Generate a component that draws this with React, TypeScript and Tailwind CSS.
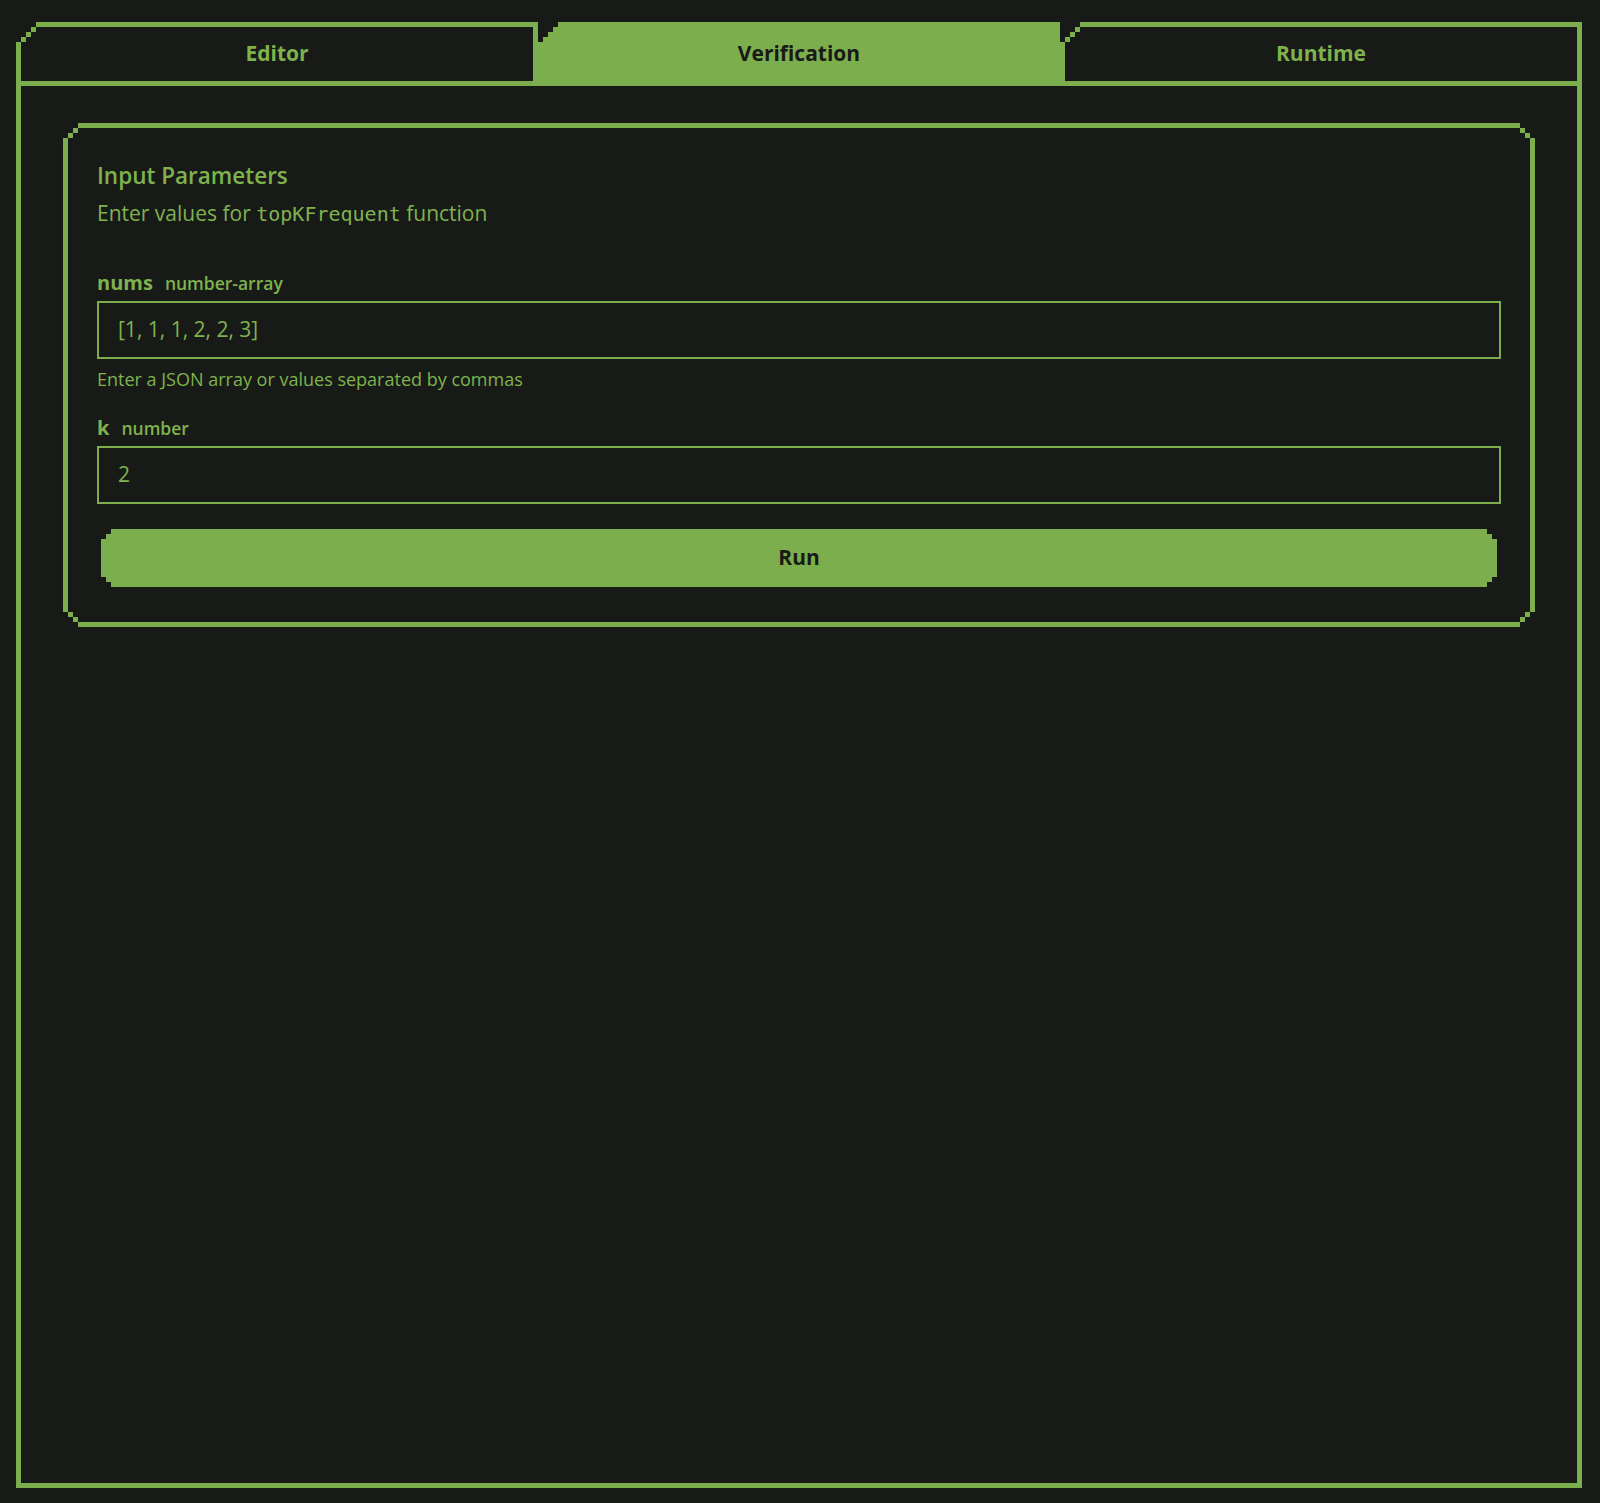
import React from "react";

// pixel-stepped corners: outer shape is green, inner shape (inset by the border) is dark
const tabOuter =
  "[clip-path:polygon(0_20px,5px_20px,5px_15px,10px_15px,10px_10px,15px_10px,15px_5px,20px_5px,20px_0,100%_0,100%_100%,0_100%)]";
const tabInner =
  "[clip-path:polygon(0_15px,5px_15px,5px_10px,10px_10px,10px_5px,15px_5px,15px_0,100%_0,100%_100%,0_100%)]";

const cardOuter =
  "[clip-path:polygon(0_15px,5px_15px,5px_10px,10px_10px,10px_5px,15px_5px,15px_0,calc(100%_-_15px)_0,calc(100%_-_15px)_5px,calc(100%_-_10px)_5px,calc(100%_-_10px)_10px,calc(100%_-_5px)_10px,calc(100%_-_5px)_15px,100%_15px,100%_calc(100%_-_15px),calc(100%_-_5px)_calc(100%_-_15px),calc(100%_-_5px)_calc(100%_-_10px),calc(100%_-_10px)_calc(100%_-_10px),calc(100%_-_10px)_calc(100%_-_5px),calc(100%_-_15px)_calc(100%_-_5px),calc(100%_-_15px)_100%,15px_100%,15px_calc(100%_-_5px),10px_calc(100%_-_5px),10px_calc(100%_-_10px),5px_calc(100%_-_10px),5px_calc(100%_-_15px),0_calc(100%_-_15px))]";
const cardInner =
  "[clip-path:polygon(0_10px,5px_10px,5px_5px,10px_5px,10px_0,calc(100%_-_10px)_0,calc(100%_-_10px)_5px,calc(100%_-_5px)_5px,calc(100%_-_5px)_10px,100%_10px,100%_calc(100%_-_10px),calc(100%_-_5px)_calc(100%_-_10px),calc(100%_-_5px)_calc(100%_-_5px),calc(100%_-_10px)_calc(100%_-_5px),calc(100%_-_10px)_100%,10px_100%,10px_calc(100%_-_5px),5px_calc(100%_-_5px),5px_calc(100%_-_10px),0_calc(100%_-_10px))]";

const Tab = ({ label, active }: { label: string; active?: boolean }) => {
  if (active) {
    return (
      <div className={`flex items-center justify-center bg-[#7dae4d] pt-[5px] ${tabOuter}`}>
        <span className="text-[21px] font-bold text-[#181a18]">{label}</span>
      </div>
    );
  }
  return (
    <div className={`flex bg-[#7dae4d] px-[5px] pt-[5px] ${tabOuter}`}>
      <div className={`flex flex-1 items-center justify-center bg-[#181a18] ${tabInner}`}>
        <span className="text-[21px] font-bold text-[#7fb24d]">{label}</span>
      </div>
    </div>
  );
};

const Field = ({
  name,
  type,
  value,
  hint,
  className,
}: {
  name: string;
  type: string;
  value: string;
  hint?: string;
  className?: string;
}) => (
  <div className={className}>
    <div className="flex items-baseline gap-3 leading-[28px]">
      <span className="text-[20px] font-bold">{name}</span>
      <span className="text-[17.5px] font-semibold">{type}</span>
    </div>
    <div className="mt-1 flex h-[58px] items-center border-2 border-[#7dae4d] px-[19px] text-[21px]">
      {value}
    </div>
    {hint && <p className="mt-[8px] text-[18px] leading-[24px]">{hint}</p>}
  </div>
);

export default function App() {
  return (
    <div className="flex h-[1503px] flex-col bg-[#181a18] pb-[15px] pl-4 pr-[18px] pt-[22px] font-['Open_Sans',sans-serif] text-[#7fb24d]">
      <div className="grid h-[59px] grid-cols-3">
        <Tab label="Editor" />
        <Tab label="Verification" active />
        <Tab label="Runtime" />
      </div>

      <div className="flex-1 border-[5px] border-[#7dae4d] px-[42px] pt-[37px]">
        <div className={`bg-[#7dae4d] p-[5px] ${cardOuter}`}>
          <div className={`bg-[#181a18] px-[29px] pb-[35px] pt-[32px] ${cardInner}`}>
            <h2 className="text-[22.5px] font-semibold leading-[32px]">Input Parameters</h2>
            <p className="mt-[7px] text-[21px] leading-[28px]">
              Enter values for{" "}
              <code className="font-['DejaVu_Sans_Mono',monospace] text-[20px]">topKFrequent</code>{" "}
              function
            </p>

            <Field
              className="mt-[41px]"
              name="nums"
              type="number-array"
              value="[1, 1, 1, 2, 2, 3]"
              hint="Enter a JSON array or values separated by commas"
            />
            <Field className="mt-[23px]" name="k" type="number" value="2" />

            <button
              className={`mx-1 mt-[25px] flex h-[58px] w-[calc(100%-8px)] items-center justify-center bg-[#7dae4d] text-[21px] font-bold text-[#181a18] ${cardInner}`}
            >
              Run
            </button>
          </div>
        </div>
      </div>
    </div>
  );
}
